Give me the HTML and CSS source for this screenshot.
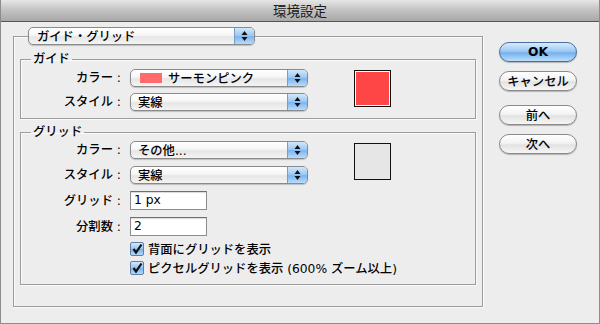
FILE: index.html
```html
<!DOCTYPE html>
<html lang="ja">
<head>
  <meta charset="UTF-8">
  <title>環境設定</title>
  <link rel="stylesheet" href="styles.css">
</head>
<body>
  <div class="window">
    <div class="titlebar">環境設定</div>

    <div class="main">
      <fieldset class="outer">
        <legend class="popup top-popup">
          <span class="popup-text">ガイド・グリッド</span>
          <span class="stepper"><svg width="7" height="12" viewBox="0 0 7 12"><path d="M3.5 1 L6.5 5 L0.5 5 Z M0.5 7 L6.5 7 L3.5 11 Z" fill="#111"/></svg></span>
        </legend>

        <!-- ガイド -->
        <fieldset class="group guide">
          <legend>ガイド</legend>
          <div class="group-body">
            <div class="fields">
              <div class="label">カラー&nbsp;:</div>
              <div class="popup">
                <span class="popup-text"><span class="chip"></span>サーモンピンク</span>
                <span class="stepper"><svg width="7" height="12" viewBox="0 0 7 12"><path d="M3.5 1 L6.5 5 L0.5 5 Z M0.5 7 L6.5 7 L3.5 11 Z" fill="#111"/></svg></span>
              </div>
              <div class="label">スタイル&nbsp;:</div>
              <div class="popup">
                <span class="popup-text">実線</span>
                <span class="stepper"><svg width="7" height="12" viewBox="0 0 7 12"><path d="M3.5 1 L6.5 5 L0.5 5 Z M0.5 7 L6.5 7 L3.5 11 Z" fill="#111"/></svg></span>
              </div>
            </div>
            <div class="swatch swatch-red"></div>
          </div>
        </fieldset>

        <!-- グリッド -->
        <fieldset class="group grid">
          <legend>グリッド</legend>
          <div class="group-body">
            <div class="fields fields-grid">
              <div class="label">カラー&nbsp;:</div>
              <div class="popup">
                <span class="popup-text">その他...</span>
                <span class="stepper"><svg width="7" height="12" viewBox="0 0 7 12"><path d="M3.5 1 L6.5 5 L0.5 5 Z M0.5 7 L6.5 7 L3.5 11 Z" fill="#111"/></svg></span>
              </div>
              <div class="label">スタイル&nbsp;:</div>
              <div class="popup">
                <span class="popup-text">実線</span>
                <span class="stepper"><svg width="7" height="12" viewBox="0 0 7 12"><path d="M3.5 1 L6.5 5 L0.5 5 Z M0.5 7 L6.5 7 L3.5 11 Z" fill="#111"/></svg></span>
              </div>
              <div class="label">グリッド&nbsp;:</div>
              <div class="text-input">1 px</div>
              <div class="label">分割数&nbsp;:</div>
              <div class="text-input">2</div>
            </div>
            <div class="swatch swatch-gray"></div>
          </div>
          <div class="checks">
            <div class="check-row">
              <span class="checkbox"><svg width="12" height="12" viewBox="0 0 12 12"><path d="M2.5 6 L5 9.5 L10.5 1.5" fill="none" stroke="#111" stroke-width="2.2"/></svg></span>
              背面にグリッドを表示
            </div>
            <div class="check-row">
              <span class="checkbox"><svg width="12" height="12" viewBox="0 0 12 12"><path d="M2.5 6 L5 9.5 L10.5 1.5" fill="none" stroke="#111" stroke-width="2.2"/></svg></span>
              ピクセルグリッドを表示 (600% ズーム以上)
            </div>
          </div>
        </fieldset>
      </fieldset>

      <div class="buttons">
        <button class="btn btn-default">OK</button>
        <button class="btn btn-cancel">キャンセル</button>
        <button class="btn btn-prev">前へ</button>
        <button class="btn btn-next">次へ</button>
      </div>
    </div>
  </div>
</body>
</html>
```

FILE: styles.css
```css
body {
  margin: 0;
  font-family: "DejaVu Sans", "Noto Sans CJK JP", sans-serif;
  font-size: 12.3px;
  font-weight: 500;
  color: #000;
  background: #ededed;
}

.window {
  width: 600px;
  height: 324px;
  box-sizing: border-box;
  border: 1px solid #8c8c8c;
  border-top: none;
  background: #ededed;
}

.titlebar {
  height: 21px;
  line-height: 22px;
  text-align: center;
  font-size: 13.5px;
  font-weight: 400;
  color: #1a1a1a;
  background: linear-gradient(#e6e6e6, #c4c4c4 45%, #a8a8a8);
  border-bottom: 1px solid #555;
}

.main {
  display: flex;
  padding: 5px 0 0 12px;
}

/* group boxes */
fieldset {
  margin: 0;
  min-width: 0;
  border: 1px solid #9c9c9c;
  box-shadow: inset 1px 1px 0 #fafafa, 1px 1px 0 #fafafa;
}

.outer {
  width: 470px;
  box-sizing: border-box;
  padding: 6px 6px 21px 6px;
}

.top-popup {
  width: 227px;
  height: 21px;
  box-sizing: border-box;
  margin-left: 8px;
  padding: 0;
}

.top-popup .popup-text {
  padding-left: 8px;
}

.group {
  padding: 0;
}

.group legend {
  margin-left: 10px;
  padding: 0 2px;
  line-height: 16px;
  height: 16px;
}

.guide .group-body {
  padding: 2px 0 7px 0;
}

.grid {
  margin-top: 5px;
  padding-bottom: 9px;
}

.grid .group-body {
  padding-top: 1px;
}

.group-body {
  display: flex;
  align-items: flex-start;
}

.fields {
  display: grid;
  grid-template-columns: 105px 178px;
  column-gap: 4px;
  row-gap: 6px;
  align-items: center;
}

.fields-grid {
  row-gap: 7px;
  grid-template-rows: 18px 18px 19px 19px;
}

.label {
  text-align: right;
  padding-right: 5px;
  line-height: 18px;
}

/* popup menus */
.popup {
  display: flex;
  height: 18px;
  box-sizing: border-box;
  border: 1px solid #8a8a8a;
  border-radius: 5px;
  background: linear-gradient(#ffffff, #f6f6f6 45%, #e6e6e6 55%, #f4f4f4);
  box-shadow: 0 1px 1px rgba(0, 0, 0, 0.2);
  overflow: hidden;
}

.popup-text {
  flex: 1;
  display: flex;
  align-items: center;
  padding-left: 7px;
  white-space: nowrap;
}

.stepper {
  width: 19px;
  display: flex;
  align-items: center;
  justify-content: center;
  border-left: 1px solid #7b9cc7;
  background: linear-gradient(#d2e7fb, #9fcaf4 45%, #7db5ee 55%, #b8dcfc);
}

.chip {
  width: 22px;
  height: 10px;
  margin-right: 6px;
  margin-left: 2px;
  background: #ff6a6a;
}

.text-input {
  width: 77px;
  height: 19px;
  box-sizing: border-box;
  border: 1px solid #8c8c8c;
  border-top-color: #6f6f6f;
  background: #fff;
  line-height: 17px;
  padding-left: 3px;
  box-shadow: inset 0 1px 1px rgba(0, 0, 0, 0.15);
}

.swatch {
  width: 37px;
  height: 37px;
  box-sizing: border-box;
  margin-left: 46px;
  margin-top: 1px;
  border: 1px solid #111;
}

.swatch-red {
  background: #ff4646;
  box-shadow: inset 0 0 0 1px #fff;
}

.swatch-gray {
  margin-top: 2px;
  background: #e6e6e6;
}

/* checkboxes */
.checks {
  margin: 6px 0 0 109px;
  display: flex;
  flex-direction: column;
  gap: 5px;
}

.check-row {
  display: flex;
  align-items: center;
  height: 14px;
  white-space: nowrap;
}

.checkbox {
  width: 14px;
  height: 14px;
  box-sizing: border-box;
  margin-right: 4px;
  border: 1px solid #5f7ea8;
  border-radius: 2px;
  background: linear-gradient(#d6eafc, #93c3f1 50%, #74b0ec 51%, #b5dafb);
  display: flex;
  align-items: center;
  justify-content: center;
}

/* buttons */
.buttons {
  display: flex;
  flex-direction: column;
  margin: 15px 0 0 16px;
}

.btn {
  width: 78px;
  height: 20px;
  padding: 0;
  font-family: inherit;
  font-size: 12.3px;
  font-weight: 500;
  color: #000;
  border: 1px solid #8a8a8a;
  border-radius: 10px;
  background: linear-gradient(#ffffff, #f3f3f3 45%, #e2e2e2 55%, #f6f6f6);
  box-shadow: 0 1px 1px rgba(0, 0, 0, 0.25);
}

.btn-default {
  font-weight: bold;
  border-color: #4c6e9e;
  background: linear-gradient(#d8ecfd, #9ccaf3 45%, #76b1ec 55%, #b9defd);
}

.btn-cancel {
  margin-top: 9px;
}

.btn-prev {
  margin-top: 14px;
}

.btn-next {
  margin-top: 9px;
}
```
